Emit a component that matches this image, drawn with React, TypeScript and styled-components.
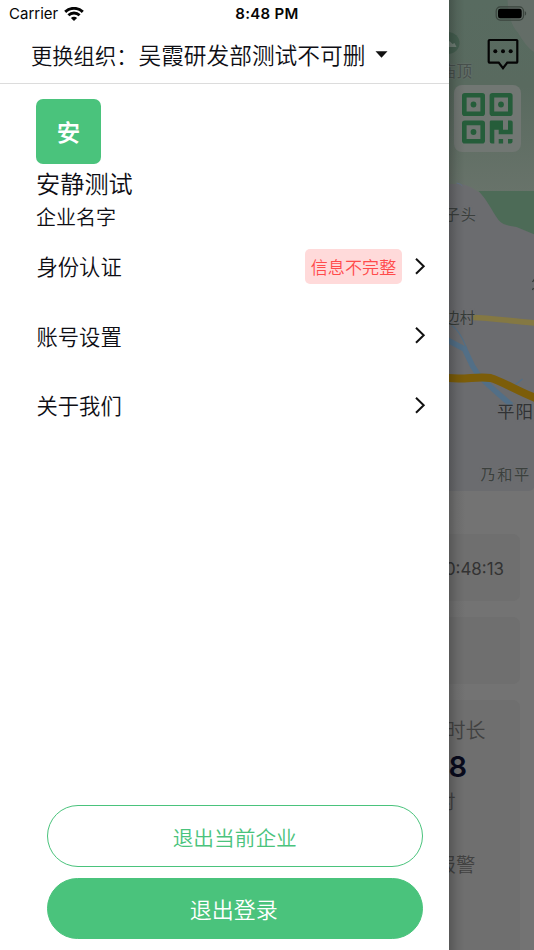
import React from "react";
import styled, { createGlobalStyle } from "styled-components";

const GlobalStyle = createGlobalStyle`
  * { box-sizing: border-box; }
  body {
    margin: 0;
    overflow: hidden;
    background: #fff;
    font-family: Inter, "Noto Sans CJK SC", sans-serif;
  }
`;

const cjk = `"Noto Sans CJK SC", sans-serif`;
const cjkLight = `"Noto Sans CJK SC DemiLight", "Noto Sans CJK SC", sans-serif`;
const green = "#4ac37c";

const Screen = styled.div`
  display: flex;
  width: 534px;
  height: 950px;
  position: relative;
  overflow: hidden;
`;

/* ---------- status bar ---------- */
const StatusBar = styled.div`
  position: absolute;
  inset: 0 0 auto 0;
  z-index: 3;
  display: grid;
  grid-template-columns: 1fr auto 1fr;
  align-items: center;
  height: 27px;
  padding: 0 7px 0 9px;
  font-size: 15px;
  line-height: 20px;
  color: #050505;
`;

const Carrier = styled.div`
  display: flex;
  align-items: center;
  gap: 6px;
  padding-top: 1px;
`;

const Clock = styled.div`
  margin-left: -2px;
  padding-top: 1px;
  font-weight: 600;
  letter-spacing: 0.3px;
`;

const BatterySlot = styled.div`
  display: flex;
  justify-content: flex-end;
  padding-bottom: 1px;
`;

/* ---------- drawer ---------- */
const Drawer = styled.aside`
  flex: none;
  display: flex;
  flex-direction: column;
  width: 448.5px;
  height: 100%;
  padding-top: 27px;
  background: #fff;
  font-family: ${cjkLight};
  font-weight: 350;
  color: #0e0e14;
`;

const OrgHeader = styled.header`
  display: flex;
  align-items: center;
  height: 57px;
  padding: 0 0 1px 31px;
  border-bottom: 1px solid #dcdcdc;
  white-space: nowrap;
`;

const OrgLabel = styled.span`
  width: 107.5px;
  font-size: 21.3px;
`;

const OrgName = styled.span`
  margin-right: 10px;
  font-size: 22.7px;
`;

const Profile = styled.section`
  display: flex;
  flex-direction: column;
  padding: 15px 36px 0;
`;

const Avatar = styled.div`
  display: grid;
  place-items: center;
  width: 65px;
  height: 65px;
  margin-bottom: 3px;
  padding-bottom: 1px;
  border-radius: 7px;
  background: ${green};
  color: #fff;
  font-size: 23px;
  font-weight: 700;
`;

const UserName = styled.div`
  font-size: 24.2px;
  line-height: 32px;
`;

const Company = styled.div`
  padding-top: 2px;
  font-size: 20px;
  line-height: 31px;
`;

const Menu = styled.nav`
  display: flex;
  flex-direction: column;
`;

const MenuRow = styled.div`
  display: flex;
  align-items: center;
  height: 69.6px;
  padding: 0 22.5px 0 36.5px;
  font-size: 21.3px;
`;

const MenuLabel = styled.span`
  flex: 1;
  padding-bottom: 2px;
`;

const Badge = styled.span`
  display: grid;
  place-items: center;
  width: 97px;
  height: 35px;
  margin-right: 12px;
  padding-bottom: 1px;
  border-radius: 5px;
  background: #ffdada;
  color: #ff4b4b;
  font-size: 17.1px;
`;

const Actions = styled.footer`
  display: flex;
  flex-direction: column;
  gap: 11px;
  margin-top: auto;
  padding: 0 25.5px 11px 46.5px;
`;

const PillButton = styled.button<{ $filled?: boolean }>`
  height: 61.5px;
  padding: ${(p) => (p.$filled ? "0 2px 1px 0" : "2px 0 0")};
  border: 1.4px solid ${green};
  border-radius: 31px;
  background: ${(p) => (p.$filled ? green : "#fff")};
  color: ${(p) => (p.$filled ? "#fff" : green)};
  font-family: ${cjkLight};
  font-weight: 350;
  font-size: ${(p) => (p.$filled ? "22px" : "20.7px")};
`;

/* ---------- dimmed home page ---------- */
const Peek = styled.main`
  position: relative;
  flex: 1;
  min-width: 0;
  height: 100%;
  overflow: hidden;
  background: #737373;
  color: #333;

  &::after {
    content: "";
    position: absolute;
    inset: 0 auto 0 0;
    width: 16px;
    background: linear-gradient(90deg, rgba(0, 0, 0, 0.22), rgba(0, 0, 0, 0.07) 50%, transparent);
  }
`;

const MapArea = styled.section`
  position: relative;
  height: 491px;
  margin-bottom: 43px;
`;

const MapArt = styled.svg`
  display: block;
`;

const MapLabel = styled.span<{ $x: number; $y: number; $size: number; $tone?: string; $weight?: number; $gap?: number }>`
  position: absolute;
  left: ${(p) => p.$x}px;
  top: ${(p) => p.$y}px;
  font-family: ${cjk};
  font-size: ${(p) => p.$size}px;
  line-height: 24px;
  font-weight: ${(p) => p.$weight ?? 400};
  letter-spacing: ${(p) => p.$gap ?? 0}px;
  color: ${(p) => p.$tone ?? "#363b38"};
  text-shadow: 0 0 2px #747678;
  white-space: nowrap;
`;

const FloatingTools = styled.div`
  position: absolute;
  top: 38px;
  right: 13px;
  display: flex;
  flex-direction: column;
  align-items: flex-end;
  gap: 14px;
`;

const ChatSlot = styled.div`
  height: 33px;
  padding-right: 2px;
`;

const QrCard = styled.div`
  display: grid;
  place-items: center;
  width: 67px;
  height: 67px;
  border-radius: 8px;
  background: #717773;
`;

const Cards = styled.section`
  display: flex;
  flex-direction: column;
  gap: 16px;
  padding-right: 14px;
`;

const Card = styled.div<{ $height: number }>`
  display: flex;
  flex-direction: column;
  align-items: flex-start;
  height: ${(p) => p.$height}px;
  border-radius: 0 7px 7px 0;
  background: #6f6f6f;
`;

const Elapsed = styled.div`
  margin: auto 0;
  padding: 2px 16px 0 0;
  align-self: flex-end;
  font-size: 16.9px;
  white-space: nowrap;
`;

const Stat = styled.div<{ $shift: number; $top: number; $size: number }>`
  margin-top: ${(p) => p.$top}px;
  margin-left: ${(p) => p.$shift}px;
  font-family: ${cjkLight};
  font-weight: 350;
  font-size: ${(p) => p.$size}px;
  line-height: 30px;
  color: #414141;
  white-space: nowrap;
`;

const StatValue = styled.div`
  margin: 6px 0 0 0;
  font-size: 29px;
  font-weight: 600;
  line-height: 32px;
  color: #080a1c;
`;

const WifiIcon = () => (
  <svg width="20" height="15" viewBox="0 0 20 15" fill="none" stroke="#050505" strokeWidth="2.9">
    <path d="M1.2 4.9C6.2.1 13.8.1 18.8 4.9" />
    <path d="M4.4 8.2C7.6 5.2 12.4 5.2 15.6 8.2" />
    <path d="M10 14.1 6.9 11C8.5 9.4 11.5 9.4 13.1 11Z" fill="#050505" stroke="none" />
  </svg>
);

const BatteryIcon = () => (
  <svg width="32" height="15" viewBox="0 0 32 15">
    <rect x="1.2" y="0.9" width="27.3" height="13.2" rx="4" fill="none" stroke="#3b443e" strokeWidth="1.2" />
    <rect x="3" y="2.7" width="23.7" height="9.6" rx="2.3" fill="#000" />
    <path d="M29.8 5.3c1.8.6 1.8 3.8 0 4.4z" fill="#3b443e" />
  </svg>
);

const Chevron = () => (
  <svg width="12" height="18" viewBox="0 0 12 18" fill="none" stroke="#111" strokeWidth="2">
    <path d="M2 .8 9.7 8.3 2 15.8" />
  </svg>
);

const Caret = () => (
  <svg width="13" height="7" viewBox="0 0 13 7">
    <path d="M.5.3h12L6.5 6.7z" fill="#111" />
  </svg>
);

const ChatIcon = () => (
  <svg width="32" height="33" viewBox="0 0 32 33">
    <path
      d="M2.5 2h27a.8.8 0 0 1 .8.8v21a.8.8 0 0 1-.8.8H20.3L16 30.200 11.700 24.600H2.500a.8.8 0 0 1-.8-.8v-21a.8.8 0 0 1 .8-.8z"
      fill="none"
      stroke="#050505"
      strokeWidth="2.2"
    />
    <g fill="#050505">
      <circle cx="8.3" cy="13.3" r="2" />
      <circle cx="16" cy="13.3" r="2" />
      <circle cx="23.7" cy="13.3" r="2" />
    </g>
  </svg>
);

const QrIcon = () => (
  <svg width="51" height="51" viewBox="0 0 51 51">
    <g fill="none" stroke="#255d3a" strokeWidth="4.6">
      <rect x="2.3" y="2.3" width="18.4" height="18.4" rx="0.5" />
      <rect x="29.9" y="2.3" width="18.4" height="18.4" rx="0.5" />
      <rect x="2.3" y="29.9" width="18.4" height="18.4" rx="0.5" />
    </g>
    <g fill="#255d3a">
      <circle cx="11.5" cy="11.5" r="2.9" />
      <circle cx="39" cy="11.5" r="2.9" />
      <circle cx="11.5" cy="39" r="2.9" />
      <path d="M29 27.500h12v9.200h5v-9.200h3a1.700 1.700 0 0 1 1.700 1.700V41.300H36.700v-4.600H32.300V50.500h-2.500a2 2 0 0 1-2-2V28.700q0-1.200 1.200-1.200z" />
      <rect x="36.7" y="46" width="4.4" height="4.5" />
      <path d="M46 46h4.500v2.500a2 2 0 0 1-2 2H46z" />
    </g>
  </svg>
);

const MapDrawing = () => (
  <MapArt width="86" height="491" viewBox="448.5 0 86 491">
    <defs>
      <linearGradient id="park" x1="0" y1="0" x2="0" y2="1">
        <stop offset="0" stopColor="#586b60" />
        <stop offset="0.45" stopColor="#596a5f" />
        <stop offset="1" stopColor="#68736a" />
      </linearGradient>
      <clipPath id="frame">
        <path d="M440 0H534V485a6 6 0 0 1-6 6H440z" />
      </clipPath>
    </defs>
    <g clipPath="url(#frame)">
      <rect x="440" width="100" height="491" fill="#6b6c6f" />
      <path d="M440 0H540V192H478C471 187 465 184 458 184H440z" fill="url(#park)" />
      <path d="M507 0C508 17 512 27 517 32C523 42 528 49 535 53V0z" fill="#676e69" opacity=".8" />
      <path d="M478 191H535V235L516 227C509 226 502 225 498 220C491 210 486 199 478 191z" fill="#4d6b57" />
      <path d="M456 183q5 1 6 3" stroke="#64738a" fill="none" />
      <circle cx="448" cy="43" r="11" fill="#455f50" />
      <path d="M445 47l4-6 3 3 2-1 2 4z" fill="#718077" />
      <path d="M472 317.5C490 318 510 321 535 323" stroke="#847843" strokeWidth="5.5" fill="none" />
      <path d="M451 325C457 329 461 335 466 348" stroke="#536f86" strokeWidth="1.3" fill="none" />
      <path d="M447 340L464 349L472 366L478 375C487 385 497 393 511 405" stroke="#526f87" strokeWidth="5.5" fill="none" />
      <path d="M512 387l10-8" stroke="#526f87" strokeWidth="1.3" fill="none" />
      <path d="M448 378C465 380 476 376 490 378C501 381 517 391 535 398" stroke="#7c5d09" strokeWidth="8" fill="none" />
      <path d="M534 279l-2 3M533 288l-1 2" stroke="#363b38" strokeWidth="1.3" />
    </g>
  </MapArt>
);

const menuItems = [
  { label: "身份认证", badge: "信息不完整" },
  { label: "账号设置" },
  { label: "关于我们" },
];

export default function App() {
  return (
    <>
      <GlobalStyle />
      <Screen>
        <StatusBar>
          <Carrier>
            Carrier <WifiIcon />
          </Carrier>
          <Clock>8:48 PM</Clock>
          <BatterySlot>
            <BatteryIcon />
          </BatterySlot>
        </StatusBar>

        <Drawer>
          <OrgHeader>
            <OrgLabel>更换组织：</OrgLabel>
            <OrgName>吴霞研发部测试不可删</OrgName>
            <Caret />
          </OrgHeader>
          <Profile>
            <Avatar>安</Avatar>
            <UserName>安静测试</UserName>
            <Company>企业名字</Company>
          </Profile>
          <Menu>
            {menuItems.map((item) => (
              <MenuRow key={item.label}>
                <MenuLabel>{item.label}</MenuLabel>
                {item.badge && <Badge>{item.badge}</Badge>}
                <Chevron />
              </MenuRow>
            ))}
          </Menu>
          <Actions>
            <PillButton>退出当前企业</PillButton>
            <PillButton $filled>退出登录</PillButton>
          </Actions>
        </Drawer>

        <Peek>
          <MapArea>
            <MapDrawing />
            <MapLabel $x={-8} $y={58} $size={15.5} $tone="#47504c" $gap={0.5}>庙顶</MapLabel>
            <MapLabel $x={-4} $y={201} $size={15.2} $tone="#3b3f3d" $gap={1}>子头</MapLabel>
            <MapLabel $x={-4} $y={304} $size={15.2}>边村</MapLabel>
            <MapLabel $x={48.5} $y={399} $size={17.5} $gap={1} $tone="#303234">平阳</MapLabel>
            <MapLabel $x={32} $y={461} $size={15.2} $gap={1.5} $tone="#3b403d">乃和平</MapLabel>
            <FloatingTools>
              <ChatSlot>
                <ChatIcon />
              </ChatSlot>
              <QrCard>
                <QrIcon />
              </QrCard>
            </FloatingTools>
          </MapArea>
          <Cards>
            <Card $height={67}>
              <Elapsed>0:48:13</Elapsed>
            </Card>
            <Card $height={67} />
            <Card $height={260}>
              <Stat $shift={-3} $top={15} $size={20}>时长</Stat>
              <StatValue>8</StatValue>
              <Stat $shift={-12} $top={3} $size={19}>时</Stat>
              <Stat $shift={-12} $top={33} $size={19.4}>报警</Stat>
            </Card>
          </Cards>
        </Peek>
      </Screen>
    </>
  );
}
